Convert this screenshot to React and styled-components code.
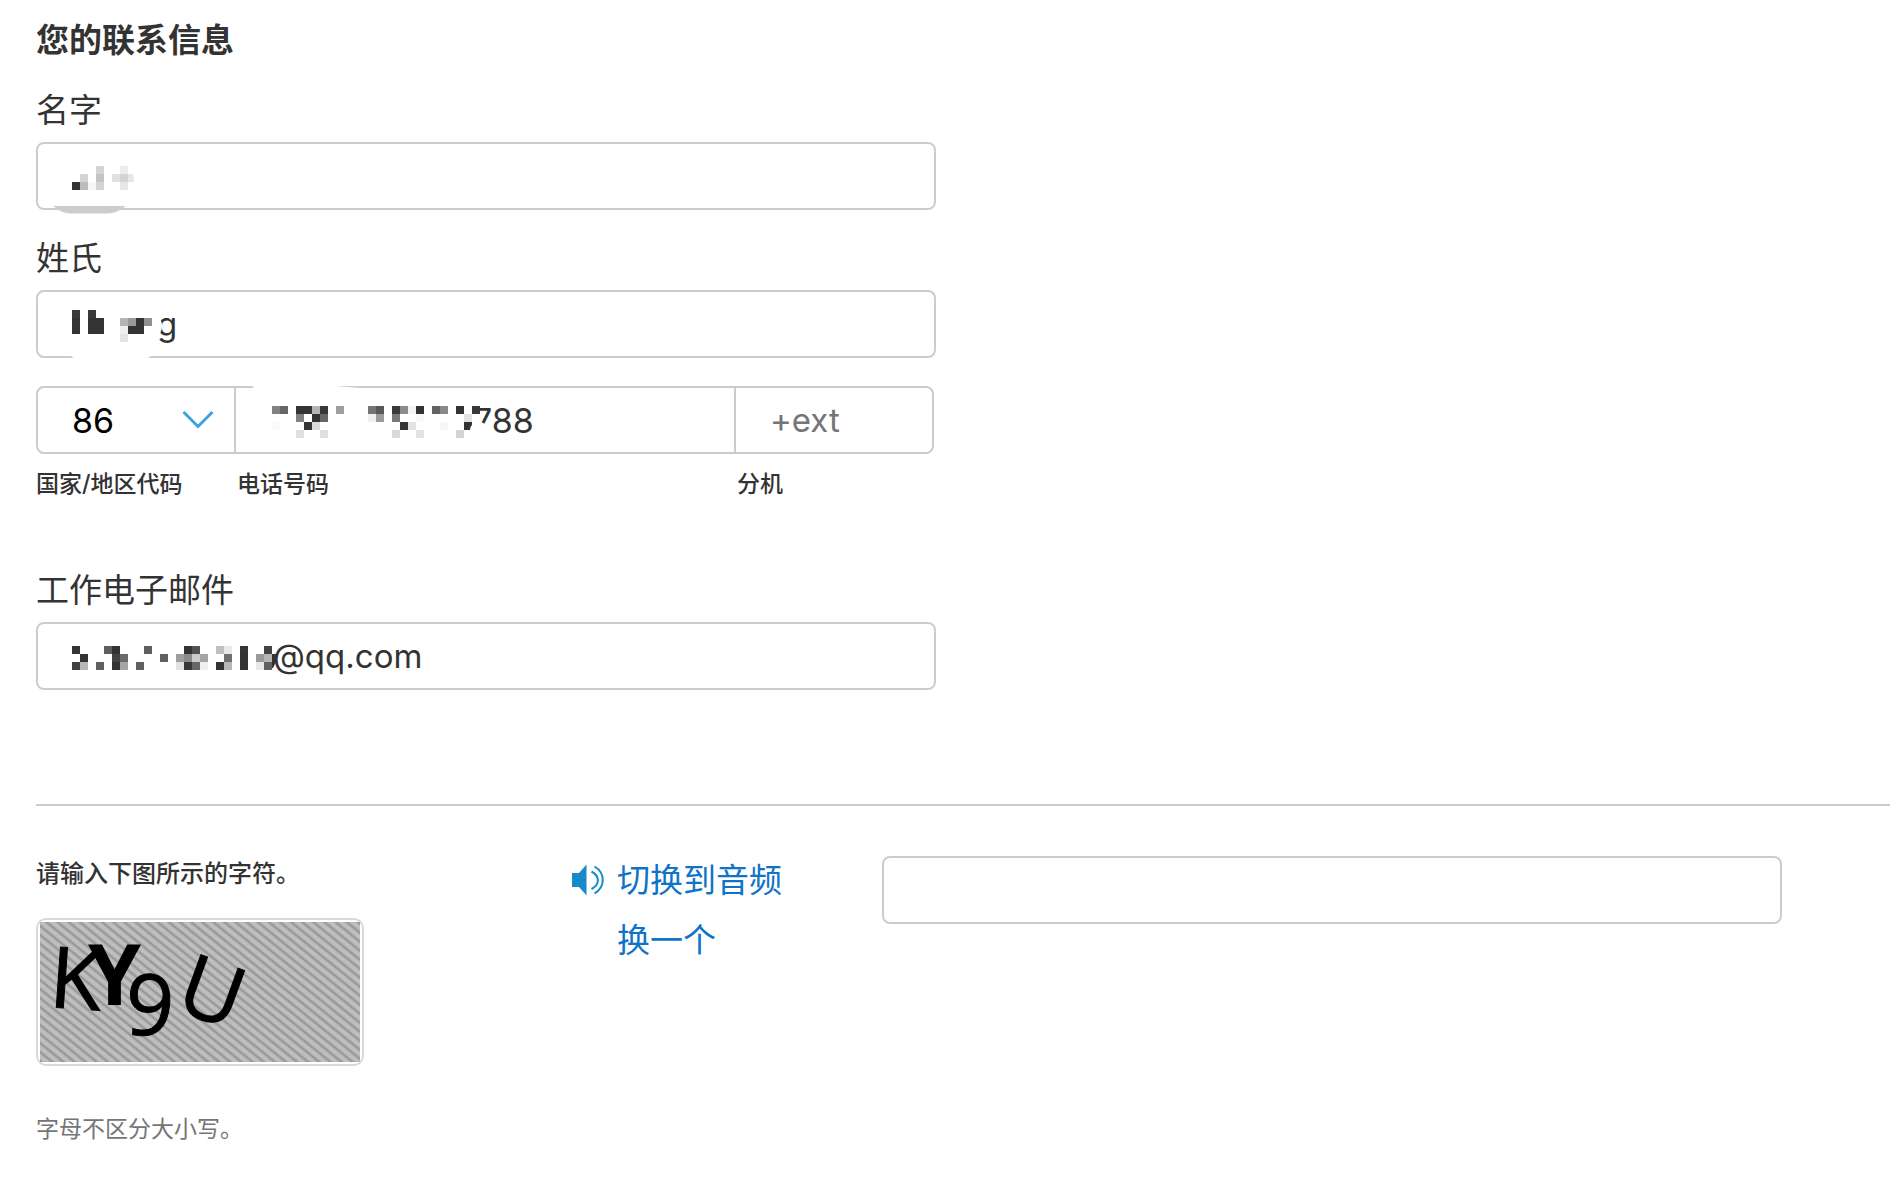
import { useState } from 'react';
import styled, { createGlobalStyle } from 'styled-components';

const CELL = 8;

// two hex digits per grey cell, '..' is an empty cell
const firstNameCells = [
  '.. .. .. d4 .. .. ed ..',
  '.. d4 .. c3 .. e1 d4 e6',
  '33 bb f7 d4 .. .. e6 ..',
];

const lastNameCells = [
  '3a .. 3a .. .. .. .. .. .. ..',
  '33 .. 33 33 .. .. b4 9a 33 90',
  '33 .. 33 33 .. .. ee 33 33 ..',
  '.. .. .. .. .. .. e4 .. .. ..',
];

const phoneCells = [
  '82 66 .. 35 35 b4 38 .. 9f .. .. .. 75 58 .. 38 8c f3 33 .. 63 8a .. 33 .. 38',
  '.. .. .. 80 .. 33 66 .. .. .. .. .. f0 9c .. 78 .. .. f9 .. .. .. .. .. e4 ..',
  'fa .. .. .. 35 d9 .. .. .. .. .. .. .. .. .. .. 33 e2 .. .. .. f7 .. .. 33 ..',
  '.. .. .. e0 .. .. e0 .. .. .. .. .. .. .. .. d9 .. .. e2 .. .. .. .. d4 .. ..',
];

const emailCells = [
  '35 .. .. .. 5e 33 .. .. .. 5e .. .. .. .. 33 52 .. .. bf e8 .. 35 .. .. 44',
  '.. 33 .. .. .. 44 6b .. .. .. .. 61 .. 9e 8a cb a5 .. .. 70 .. 33 .. 9a b5',
  '40 b8 .. 61 .. 33 a6 .. 60 .. .. .. .. e2 38 66 f0 .. 33 b8 .. 33 .. e8 60',
];

const Mosaic = ({ cells, top, width, children }) => (
  <MosaicSvg width={width} height="64" aria-hidden="true">
    {cells.map((line, row) =>
      line.split(' ').map((shade, col) =>
        shade === '..' ? null : (
          <rect
            key={`${row}-${col}`}
            x={col * CELL}
            y={top + row * CELL}
            width={CELL}
            height={CELL}
            fill={`#${shade}${shade}${shade}`}
          />
        )
      )
    )}
    {children}
  </MosaicSvg>
);

const SpeakerIcon = () => (
  <svg width="32" height="32" viewBox="0 0 32 32" fill="none" aria-hidden="true">
    <path d="M0 9H7L14.5 0.5V31.5L7 23H0Z" fill="#178acb" />
    <path d="M19.5 7.5C28 12 28 20.5 19.5 25" stroke="#178acb" strokeWidth="2" />
    <path d="M22.5 2.5C33.5 9 33.5 23 22.5 29.5" stroke="#178acb" strokeWidth="2" />
  </svg>
);

const CaptchaImage = () => (
  <svg width="320" height="140" viewBox="0 0 320 140" role="img" aria-label="KYgU">
    <defs>
      <pattern id="stripes" width="7" height="7" patternUnits="userSpaceOnUse" patternTransform="rotate(39)">
        <rect width="7" height="7" fill="#bfbfbf" />
        <rect y="1" width="7" height="4" fill="#b2b2b2" />
        <rect y="2" width="7" height="2" fill="#999" />
      </pattern>
    </defs>
    <rect width="320" height="140" fill="url(#stripes)" />
    <Glyph x="8" y="85" transform="rotate(4 8 85)">K</Glyph>
    <Glyph x="48" y="83" $bold>Y</Glyph>
    <Glyph x="84" y="112" transform="rotate(3 84 112)">9</Glyph>
    <Glyph x="133" y="87" transform="rotate(20 133 87)">U</Glyph>
  </svg>
);

const App = () => {
  const [firstName, setFirstName] = useState('');
  const [lastName, setLastName] = useState('g');
  const [phone, setPhone] = useState('788');
  const [ext, setExt] = useState('');
  const [email, setEmail] = useState('@qq.com');
  const [answer, setAnswer] = useState('');

  return (
    <>
      <GlobalStyle />
      <Page>
        <Contact>
          <Title>您的联系信息</Title>

          <Label htmlFor="firstName">名字</Label>
          <Field>
            <Mosaic cells={firstNameCells} top={22} width={64}>
              <path d="M56 20Q62 28 62 38H66V20Z" fill="#fff" />
              <path d="M-19 62H54C46 67 44 69 36 69.5H-1C-9 69 -12 67 -19 62Z" fill="#ccc" />
            </Mosaic>
            <Input id="firstName" value={firstName} onChange={(e) => setFirstName(e.target.value)} />
          </Field>

          <Label htmlFor="lastName">姓氏</Label>
          <Field>
            <Mosaic cells={lastNameCells} top={18} width={85}>
              <ellipse cx="85" cy="34" rx="5" ry="9" fill="#fff" />
              <path d="M-1 64H79L74 67H3Z" fill="#fff" />
            </Mosaic>
            <Input id="lastName" value={lastName} onChange={(e) => setLastName(e.target.value)} />
          </Field>

          <PhoneRow>
            <div>
              <Segment $first>
                <Select id="country" defaultValue="86">
                  <option value="86">86</option>
                  <option value="1">1</option>
                </Select>
                <Chevron width="32" height="20" viewBox="0 0 32 20" aria-hidden="true">
                  <path d="M1.5 2L16 16.5L30.5 2" fill="none" stroke="#3ba3dc" strokeWidth="3" />
                </Chevron>
              </Segment>
              <Caption htmlFor="country">国家/地区代码</Caption>
            </div>
            <div>
              <Segment>
                <Mosaic cells={phoneCells} top={18} width={201}>
                  <ellipse cx="207" cy="42" rx="9" ry="8" fill="#fff" />
                  <path d="M-20 -2H63L88 0V1H-17Z" fill="#fff" />
                </Mosaic>
                <Input
                  id="phone"
                  type="tel"
                  $digits
                  value={phone}
                  onChange={(e) => setPhone(e.target.value)}
                />
              </Segment>
              <Caption htmlFor="phone" $indent>电话号码</Caption>
            </div>
            <div>
              <Segment $last>
                <Input id="ext" placeholder="+ext" value={ext} onChange={(e) => setExt(e.target.value)} />
              </Segment>
              <Caption htmlFor="ext" $indent>分机</Caption>
            </div>
          </PhoneRow>

          <Label htmlFor="email">工作电子邮件</Label>
          <Field>
            <Mosaic cells={emailCells} top={22} width={201}>
              <path d="M200 30H204V38L201 44H200Z" fill="#333" />
            </Mosaic>
            <Input id="email" value={email} onChange={(e) => setEmail(e.target.value)} />
          </Field>
        </Contact>

        <Divider />

        <Captcha>
          <div>
            <Prompt htmlFor="answer">请输入下图所示的字符。</Prompt>
            <ImageFrame>
              <CaptchaImage />
            </ImageFrame>
            <Hint>字母不区分大小写。</Hint>
          </div>
          <Actions>
            <ActionLink href="#audio">
              <SpeakerIcon />
              切换到音频
            </ActionLink>
            <ActionLink href="#refresh" $indent>换一个</ActionLink>
          </Actions>
          <Field>
            <Input id="answer" value={answer} onChange={(e) => setAnswer(e.target.value)} />
          </Field>
        </Captcha>
      </Page>
    </>
  );
};

export default App;

const GlobalStyle = createGlobalStyle`
  * {
    box-sizing: border-box;
  }

  body {
    margin: 0;
    background: #fff;
    color: #333;
    font-family: Inter, 'Noto Sans CJK SC', sans-serif;
  }
`;

const Page = styled.main`
  padding: 18px 0 32px 36px;
`;

const Contact = styled.section`
  max-width: 900px;
`;

const Title = styled.h2`
  margin: 0;
  font-size: 33px;
  line-height: 44px;
  font-weight: 700;
`;

const Label = styled.label`
  display: block;
  margin: 26px 0 10px;
  font-size: 33px;
  line-height: 44px;
`;

const Field = styled.div`
  display: flex;
  width: 100%;
  max-width: 900px;
  height: 68px;
  padding-left: 34px;
  border: 2px solid #ccc;
  border-radius: 8px;
`;

const Segment = styled(Field)`
  position: relative;
  border-left-width: ${({ $first }) => ($first ? '2px' : '0')};
  border-radius: ${({ $first, $last }) => ($first ? '8px 0 0 8px' : $last ? '0 8px 8px 0' : '0')};
  padding-left: ${({ $first, $last }) => ($first || $last ? '34px' : '36px')};
`;

const Input = styled.input`
  flex: 1;
  min-width: 0;
  padding: 0;
  border: 0;
  outline: 0;
  background: transparent;
  color: #333;
  font-family: inherit;
  font-size: ${({ $digits }) => ($digits ? '34px' : '33px')};

  &::placeholder {
    color: #757575;
  }
`;

const Select = styled.select`
  flex: 1;
  min-width: 0;
  padding: 0;
  border: 0;
  outline: 0;
  appearance: none;
  background: transparent;
  color: #000;
  font-family: inherit;
  font-size: 34px;
`;

const Chevron = styled.svg`
  position: absolute;
  top: 22px;
  right: 20px;
  pointer-events: none;
`;

const MosaicSvg = styled.svg`
  flex: none;
  position: relative;
  overflow: visible;
  pointer-events: none;
`;

const PhoneRow = styled.div`
  display: grid;
  grid-template-columns: minmax(0, 200fr) minmax(0, 500fr) minmax(0, 198fr);
  margin: 28px 2px 68px 0;
`;

const Caption = styled.label`
  display: block;
  margin-top: 14px;
  padding-left: ${({ $indent }) => ($indent ? '1px' : '0')};
  font-size: 23px;
  line-height: 32px;
  font-weight: 500;
`;

const Divider = styled.hr`
  margin: 114px 0 50px;
  border: 0;
  border-top: 2px solid #ccc;
`;

const Captcha = styled.section`
  display: grid;
  grid-template-columns: 536fr 310fr 1008fr;
  align-items: start;
`;

const Prompt = styled.label`
  display: block;
  margin-bottom: 26px;
  font-size: 24px;
  line-height: 36px;
  font-weight: 500;
`;

const ImageFrame = styled.div`
  width: 328px;
  padding: 2px;
  border: 2px solid #d9d9d9;
  border-radius: 10px;

  svg {
    display: block;
  }
`;

const Glyph = styled.text`
  font-family: 'Open Sans', sans-serif;
  font-size: 85px;
  font-weight: ${({ $bold }) => ($bold ? 700 : 400)};
  fill: #000;
  stroke: #000;
  stroke-width: ${({ $bold }) => ($bold ? 0 : 1)};
`;

const Hint = styled.p`
  margin: 46px 0 0;
  font-size: 23px;
  line-height: 34px;
  color: #757575;
`;

const Actions = styled.div`
  display: flex;
  flex-direction: column;
  align-items: flex-start;
  gap: 12px;
`;

const ActionLink = styled.a`
  display: flex;
  align-items: center;
  gap: 13px;
  padding-left: ${({ $indent }) => ($indent ? '45px' : '0')};
  font-size: 33px;
  line-height: 48px;
  color: #0f73c8;
  text-decoration: none;
`;
